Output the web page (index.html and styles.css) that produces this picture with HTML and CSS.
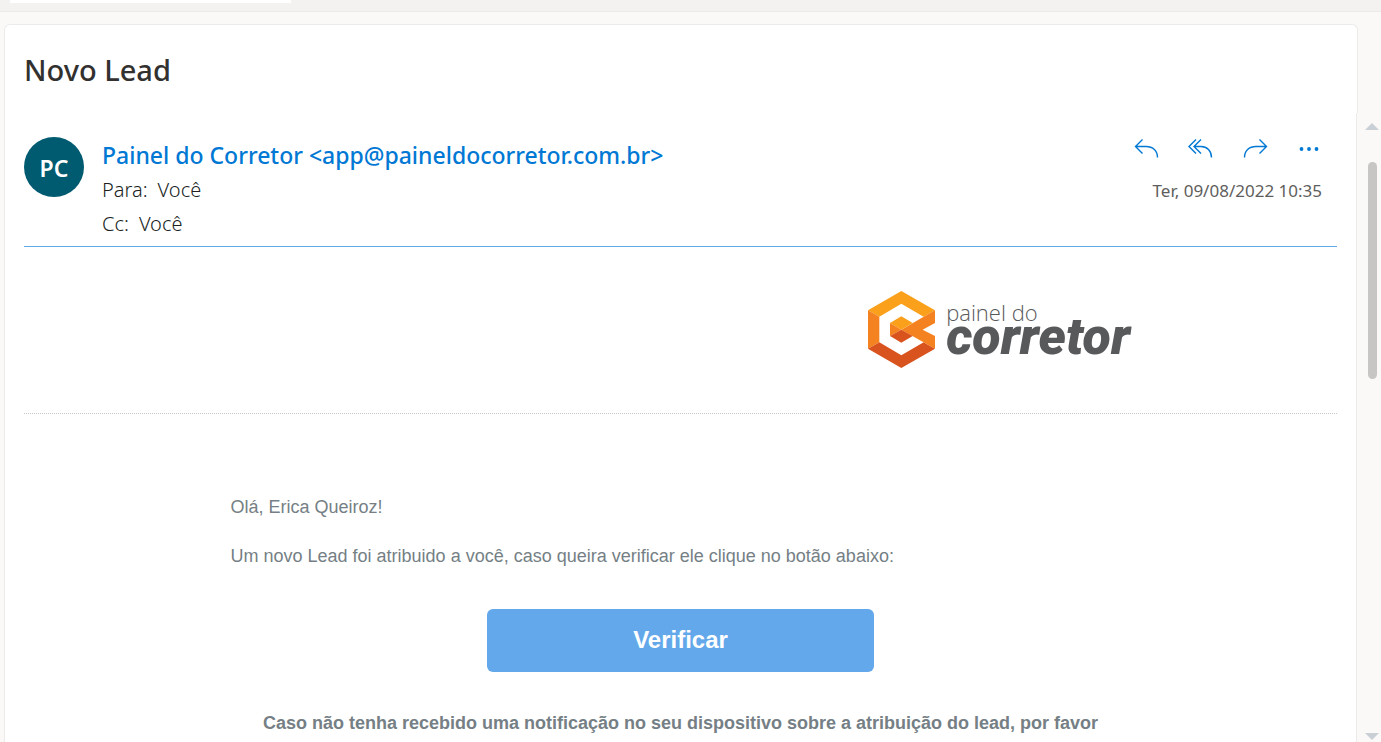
FILE: index.html
```html
<!DOCTYPE html>
<html lang="pt-BR">
<head>
<meta charset="utf-8">
<title>Novo Lead</title>
<link rel="stylesheet" href="styles.css">
</head>
<body>
<div class="topbar"><div class="tab"></div></div>
<main class="pane">
  <header class="subject"><h1>Novo Lead</h1></header>
  <div class="reader">
    <article class="message">
      <div class="meta">
        <div class="avatar">PC</div>
        <div class="people">
          <h2 class="sender">Painel do Corretor &lt;app@paineldocorretor.com.br&gt;</h2>
          <p class="recipient"><span>Para:</span><span>Você</span></p>
          <p class="recipient"><span>Cc:</span><span>Você</span></p>
        </div>
        <div class="side">
          <div class="actions">
            <button type="button" aria-label="Responder"><svg width="26" height="22" viewBox="0 0 26 22"><path d="M8.500 1.500 1.500 8.500 8.500 15.500M1.500 8.500H12C19 8.500 23.500 13 23.500 19.500"/></svg></button>
            <button type="button" aria-label="Responder a todos"><svg width="26" height="22" viewBox="0 0 26 22"><path d="M8 1.500 1 8.500 8 15.500M13 1.500 6 8.500 13 15.500M6 8.500H13C19 8.500 23.500 13 23.500 19.500"/></svg></button>
            <button type="button" aria-label="Encaminhar"><svg width="26" height="22" viewBox="0 0 26 22"><path d="M17.500 1.500 24.500 8.500 17.500 15.500M24.500 8.500H14C7 8.500 2.500 13 2.500 19.500"/></svg></button>
            <button type="button" aria-label="Mais ações"><svg class="dots" width="26" height="22" viewBox="0 0 26 22"><circle cx="5.500" cy="11" r="1.900"/><circle cx="13" cy="11" r="1.900"/><circle cx="20.500" cy="11" r="1.900"/></svg></button>
          </div>
          <time datetime="2022-08-09T10:35">Ter, 09/08/2022 10:35</time>
        </div>
      </div>
      <div class="brand">
        <svg width="67" height="77" viewBox="24 17 201 231" aria-hidden="true">
          <path fill="#faa01b" d="M124 17 225 75 191 94 124 55 58 94 24 75Z"/>
          <path fill="#f58220" d="M24 75 58 94V171L24 190Z"/>
          <path fill="#d9531e" d="M24 190 58 171 124 210 191 171 225 190 124 248Z"/>
          <path fill="#f58220" d="M225 75V113L188 133 225 152V190L124 133 191 94Z"/>
          <path fill="#faa01b" d="M124 93 158 113 124 133 90 113Z"/>
          <path fill="#f58220" d="M90 113 124 133 90 152Z"/>
          <path fill="#d9531e" d="M90 152 124 133 158 152 124 172Z"/>
        </svg>
        <div class="wordmark"><span class="light">painel do</span><span class="heavy">corretor</span></div>
      </div>
      <div class="content">
        <p>Olá, Erica Queiroz!</p>
        <p>Um novo Lead foi atribuido a você, caso queira verificar ele clique no botão abaixo:</p>
        <button class="verify" type="button">Verificar</button>
        <p class="note">Caso não tenha recebido uma notificação no seu dispositivo sobre a atribuição do lead, por favor</p>
      </div>
    </article>
    <div class="scrollbar">
      <svg width="14" height="8" viewBox="0 0 14 8"><path d="M0 8 7 1 14 8Z"/></svg>
      <div class="track"><div class="thumb"></div></div>
      <svg width="14" height="8" viewBox="0 0 14 8"><path d="M0 0 7 7 14 0Z"/></svg>
    </div>
  </div>
</main>
</body>
</html>
```
FILE: styles.css
```css
* { box-sizing: border-box; }
h1, h2, p { margin: 0; }
body {
  margin: 0;
  height: 100vh;
  overflow: hidden;
  display: flex;
  flex-direction: column;
  background: #faf9f8;
  color: #323130;
  font-family: "Noto Sans", sans-serif;
}
button { border: 0; padding: 0; background: none; font: inherit; cursor: pointer; }
.topbar { flex: none; height: 12px; padding-left: 10px; background: #f3f2f1; border-bottom: 1px solid #edebe9; }
.tab { width: 281px; height: 3px; background: #fff; }
.pane { flex: 1; min-height: 0; display: flex; flex-direction: column; padding: 12px 0 0 4px; }
.subject {
  flex: none;
  margin-right: 23px;
  height: 89px;
  padding: 25px 19px 0;
  background: #fff;
  border: 1px solid #edebe9;
  border-bottom: 0;
  border-radius: 6px 6px 0 0;
}
.subject h1 { font-size: 29px; line-height: 40px; font-weight: 500; }
.reader { flex: 1; min-height: 0; display: flex; }
.message {
  flex: 1;
  min-width: 0;
  overflow: hidden;
  padding: 24px 19px 0;
  background: #fff;
  border: 1px solid #edebe9;
  border-width: 0 1px;
}
.meta { display: flex; gap: 18px; height: 110px; border-bottom: 1px solid #62a8ea; }
.avatar {
  flex: none;
  width: 60px;
  height: 60px;
  border-radius: 50%;
  background: #005b70;
  color: #fff;
  font-size: 23px;
  font-weight: 600;
  line-height: 62px;
  text-align: center;
}
.people { flex: 1; min-width: 0; }
.sender { font-size: 23px; line-height: 36px; font-weight: 500; color: #0078d4; white-space: nowrap; }
.recipient { display: flex; gap: 10px; font-size: 20px; line-height: 34px; font-weight: 300; color: #201f1e; }
.side { padding-right: 15px; display: flex; flex-direction: column; align-items: flex-end; gap: 18px; }
.actions { display: flex; gap: 28px; height: 24px; padding-top: 1px; }
.actions button { width: 26px; height: 22px; color: #0078d4; }
.actions svg { display: block; fill: none; stroke: currentColor; stroke-width: 1.400; }
.actions .dots { fill: currentColor; stroke: none; }
.side time { font-size: 17px; line-height: 24px; color: #605e5c; white-space: nowrap; }
.brand {
  display: flex;
  justify-content: flex-end;
  gap: 11px;
  height: 167px;
  padding: 44px 207px 0 0;
  border-bottom: 1px dotted #c8c8c8;
}
.wordmark { display: flex; flex-direction: column; padding-top: 10px; color: #58595b; }
.light { font-family: "Open Sans", sans-serif; font-size: 22px; line-height: 22px; font-weight: 300; }
.heavy { font-family: Roboto, sans-serif; font-size: 52px; line-height: 28px; font-weight: 900; font-style: italic; }
.content {
  width: 900px;
  max-width: 100%;
  margin: 0 auto;
  padding-top: 81px;
  display: flex;
  flex-direction: column;
  gap: 25px;
  font: 18px/24px "Liberation Sans", Arial, sans-serif;
  color: #757f85;
}
.verify {
  align-self: center;
  width: 387px;
  height: 63px;
  padding-bottom: 2px;
  margin-top: 16px;
  border-radius: 6px;
  background: #62a8ea;
  color: #fff;
  font-size: 24px;
  font-weight: 700;
}
.note { margin-top: 14px; text-align: center; font-weight: 700; }
.scrollbar { flex: none; width: 24px; padding: 9px 2px 1px 0; display: flex; flex-direction: column; align-items: flex-end; }
.scrollbar svg { flex: none; display: block; fill: #c9d0d5; }
.track { flex: 1; padding: 32px 2px 0 0; }
.thumb { width: 9px; height: 38%; border-radius: 5px; background: #c8c6c4; }
```
